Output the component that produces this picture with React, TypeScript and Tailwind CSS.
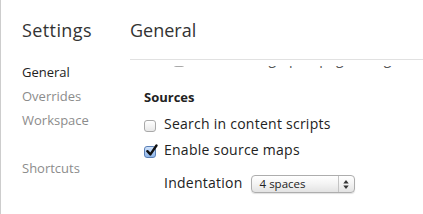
import React from "react";

const font = { fontFamily: '"Open Sans", "DejaVu Sans", sans-serif' };

function Checkbox({ checked }: { checked?: boolean }) {
  return (
    <span
      className={`relative mt-[8px] block h-[12px] w-[12px] shrink-0 rounded-[3px] border ${
        checked
          ? "border-[#5a7fb5] bg-gradient-to-b from-[#cfe2fb] to-[#8fb6ea]"
          : "border-[#a9a9a9] bg-gradient-to-b from-[#ffffff] to-[#e8e8e8]"
      }`}
    >
      {checked && (
        <svg viewBox="0 0 12 12" className="absolute left-[0px] top-[-3px] h-[13px] w-[13px]">
          <path d="M2.2 6.6 L5 9.6 L10.6 1.4" fill="none" stroke="#111" strokeWidth="2.2" strokeLinecap="round" strokeLinejoin="round" />
        </svg>
      )}
    </span>
  );
}

function CheckRow({ label, checked, className = "" }: { label: string; checked?: boolean; className?: string }) {
  return (
    <div className={`flex h-6 items-start gap-2 leading-6 ${className}`}>
      <Checkbox checked={checked} />
      <span className="whitespace-nowrap">{label}</span>
    </div>
  );
}

export default function App() {
  const navItems: [string, boolean][] = [
    ["General", true],
    ["Overrides", false],
    ["Workspace", false],
  ];

  return (
    <div className="flex h-[214px] w-[423px] overflow-hidden border-l border-[#cdcdcd] bg-white text-[13px] text-[#222]" style={font}>
      <aside className="w-[129px] shrink-0 pl-[21px] pt-[18px]">
        <h1 className="text-[18px] leading-6 tracking-[0.4px] text-[#333]">Settings</h1>
        <nav className="mt-[18px] flex flex-col">
          {navItems.map(([label, active]) => (
            <div key={label} className={`h-6 leading-6 ${active ? "text-[#222]" : "text-[#8c8c8c]"}`}>
              {label}
            </div>
          ))}
          <div className="mt-6 h-6 leading-6 text-[#8c8c8c]">Shortcuts</div>
        </nav>
      </aside>

      <main className="flex min-w-0 flex-1 flex-col">
        <header className="h-[60px] shrink-0 border-b border-[#e1e1e1] pt-[18px]">
          <h2 className="text-[18px] leading-6 text-[#333]">General</h2>
        </header>

        <div className="mt-[6px] flex-1 overflow-hidden pl-[14px] text-[14px] tracking-[0.25px]">
          <div className="mt-[-19px]">
            <CheckRow className="pl-[29px] text-[#555]" label="Preserve log upon page navigation" />

            <div className="mt-[14px] h-6 text-[13px] font-bold leading-6 tracking-normal">Sources</div>
            <CheckRow className="mt-[3px]" label="Search in content scripts" />
            <CheckRow className="mt-[2px]" label="Enable source maps" checked />

            <div className="mt-[9px] flex h-6 items-center gap-2 pl-[20px] leading-6">
              <span>Indentation</span>
              <div className="mt-[2px] flex h-[18px] w-[104px] items-stretch rounded-[4px] border border-[#adadad] bg-gradient-to-b from-[#ffffff] via-[#f3f3f3] to-[#e3e3e3] shadow-[0_1px_1px_rgba(0,0,0,0.12)]">
                <span className="flex-1 pl-[8px] text-[11.5px] leading-[16px] tracking-normal text-[#222]">4 spaces</span>
                <span className="flex w-[16px] items-center justify-center border-l border-[#c4c4c4]">
                  <svg viewBox="0 0 6 10" className="h-[9px] w-[6px]">
                    <path d="M3 0 L6 4 L0 4 Z" fill="#333" />
                    <path d="M3 10 L6 6 L0 6 Z" fill="#333" />
                  </svg>
                </span>
              </div>
            </div>
          </div>
        </div>
      </main>
    </div>
  );
}
